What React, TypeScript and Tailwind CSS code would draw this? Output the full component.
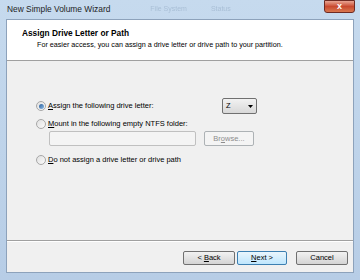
const Radio = ({ checked }: { checked?: boolean }) => (
  <span className="relative flex h-[10px] w-[10px] shrink-0 items-center justify-center rounded-full border border-[#a7a7a7] bg-gradient-to-br from-[#e0e0e0] to-[#fbfbfb]">
    {checked && (
      <span className="h-[5px] w-[5px] rounded-full bg-gradient-to-br from-[#2a5f9b] to-[#8fbde8]" />
    )}
  </span>
);

const Button = ({ children, primary }: { children: React.ReactNode; primary?: boolean }) => (
  <button
    className={
      primary
        ? "flex h-[14px] w-[50px] items-center justify-center rounded-[2px] border border-[#3c7fb1] bg-gradient-to-b from-[#eaf6fd] to-[#bee6fd] text-[7.5px] text-black"
        : "flex h-[14px] w-[52px] items-center justify-center rounded-[2px] border border-[#707070] bg-gradient-to-b from-[#f2f2f2] to-[#d4d4d4] text-[7.5px] text-black"
    }
  >
    {children}
  </button>
);

export default function App() {
  return (
    <div
      className="flex h-[280px] w-[360px] flex-col overflow-hidden bg-gradient-to-b from-[#c6daee] to-[#b7cde6] text-black"
      style={{ fontFamily: '"Liberation Sans", Arial, sans-serif' }}
    >
      {/* title bar */}
      <div className="flex h-[19px] shrink-0 items-center justify-between pl-[7px] pr-[5px]">
        <span className="text-[8.4px] text-[#1e1e1e]">New Simple Volume Wizard</span>
        <div className="flex h-[19px] flex-1 items-center gap-6 pl-10 text-[7px] text-[#a9bfd6] blur-[0.7px]">
          <span>File System</span>
          <span>Status</span>
        </div>
        <div className="-mt-[6px] flex h-[13px] w-[31px] items-center justify-center rounded-b-[3px] border border-[#6e2a22] bg-gradient-to-b from-[#e8a493] via-[#c9492f] to-[#d8774f] text-[9px] font-bold leading-none text-white">
          x
        </div>
      </div>

      {/* client */}
      <div className="mx-[6px] mb-[7px] flex flex-1 flex-col border border-[#8da2bb] bg-[#f0f0f0]">
        <div className="flex h-[41px] flex-col border-b border-[#a0a0a0] bg-white pl-[15px] pt-[8px]">
          <span className="text-[8.3px] font-bold leading-[10px]">Assign Drive Letter or Path</span>
          <span className="pl-[15px] pt-[2px] text-[7.2px] leading-[9px]">
            For easier access, you can assign a drive letter or drive path to your partition.
          </span>
        </div>

        <div className="flex flex-1 flex-col pl-[29px] pt-[37px] text-[7.5px]">
          <div className="flex h-[16px] items-center">
            <div className="flex w-[186px] items-center gap-[2px]">
              <Radio checked />
              <span>
                <u>A</u>ssign the following drive letter:
              </span>
            </div>
            <div className="flex h-[16px] w-[35px] items-center justify-between rounded-[2px] border border-[#707070] bg-gradient-to-b from-[#f2f2f2] to-[#d8d8d8] px-[3px]">
              <span>Z</span>
              <svg width="5" height="3" viewBox="0 0 5 3">
                <path d="M0 0h5L2.5 3z" fill="#000" />
              </svg>
            </div>
          </div>
          <div className="mt-[4px] flex h-[12px] items-center gap-[2px]">
            <Radio />
            <span>
              <u>M</u>ount in the following empty NTFS folder:
            </span>
          </div>
          <div className="mt-[1px] flex items-center gap-[8px] pl-[13px]">
            <div className="h-[15px] w-[147px] rounded-[2px] border border-[#c0c0c0] bg-[#f4f4f4]" />
            <div className="flex h-[15px] w-[50px] items-center justify-center rounded-[2px] border border-[#adb2b5] bg-[#f4f4f4] text-[#8d8d8d]">
              Br<u>o</u>wse...
            </div>
          </div>
          <div className="mt-[8px] flex h-[12px] items-center gap-[2px]">
            <Radio />
            <span>
              <u>D</u>o not assign a drive letter or drive path
            </span>
          </div>
        </div>

        <div className="h-[32px] border-t border-[#a0a0a0] shadow-[inset_0_1px_0_#ffffff]">
          <div className="flex justify-end pr-[5px] pt-[10px]">
            <div className="flex gap-[2px]">
              <Button>
                &lt;&nbsp;<u>B</u>ack
              </Button>
              <Button primary>
                <u>N</u>ext&nbsp;&gt;
              </Button>
            </div>
            <div className="ml-[9px]">
              <Button>Cancel</Button>
            </div>
          </div>
        </div>
      </div>
    </div>
  );
}
